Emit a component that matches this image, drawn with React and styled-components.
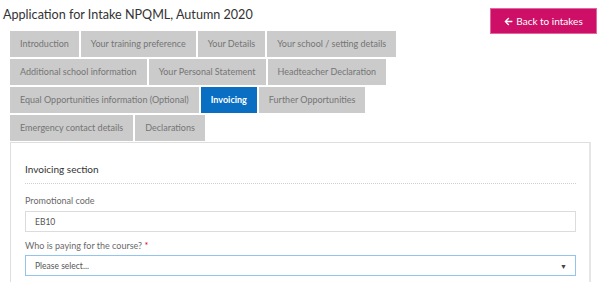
import styled, { createGlobalStyle } from 'styled-components'

const Global = createGlobalStyle`
  body{
    margin: 0;
    background: #fff;
    font-family: "Lato", "Liberation Sans", sans-serif;
  }
`

const Page = styled.div`
  padding: 0 5px 0 3px;
`

const Top = styled.div`
  display: flex;
  justify-content: space-between;
  align-items: flex-start;
`

const Heading = styled.div`
  display: flex;
  flex-direction: column;
`

const Title = styled.h1`
  margin: 5px 0 6px;
  font-family: "Lato", sans-serif;
  font-weight: 400;
  font-size: 12.6px;
  line-height: 20px;
  color: #333;
`

const Tabs = styled.div`
  display: flex;
  flex-wrap: wrap;
  gap: 2px;
  width: 430px;
  margin-left: 7px;
`

const Tab = styled.div`
  height: 26px;
  line-height: 26px;
  padding: 0 10px;
  font-size: 9px;
  background: ${p => p.$active ? '#0a6fc2' : '#cbcbcb'};
  color: ${p => p.$active ? '#fff' : '#757575'};
  font-weight: ${p => p.$active ? 700 : 400};
  white-space: nowrap;
`

const BackButton = styled.button`
  margin-top: 8px;
  width: 107px;
  height: 26px;
  display: flex;
  align-items: center;
  justify-content: center;
  gap: 3px;
  background: #cd0f67;
  border: 1px solid #e4669f;
  color: #fff;
  font-family: "Lato", sans-serif;
  font-size: 10px;
  padding: 0;
`

const Panel = styled.div`
  margin: 1px 6px 0 7px;
  border: 1px solid #dedede;
  border-right: 2px solid #e6e6e6;
  border-bottom: none;
  padding: 18px 13px 10px 14px;
  height: 140px;
  box-sizing: border-box;
`

const SectionTitle = styled.div`
  font-size: 10px;
  line-height: 16px;
  color: #333;
  padding-bottom: 6px;
  border-bottom: 1px dotted #cfcfcf;
  margin-bottom: 10px;
`

const Label = styled.div`
  font-size: 9px;
  line-height: 14px;
  color: #6a6a6a;
  margin-bottom: ${p => p.$gap}px;
`

const Star = styled.span`
  color: #d9002a;
`

const Field = styled.div`
  height: 21px;
  box-sizing: border-box;
  border: 1px solid ${p => p.$focus ? '#93c4ee' : '#dcdcdc'};
  display: flex;
  align-items: center;
  justify-content: space-between;
  padding: 0 8px 0 9px;
  font-size: 8.5px;
  color: #555;
  margin-bottom: ${p => p.$gap || 0}px;
`

const Arrow = styled.span`
  font-size: 7px;
  color: #444;
`

const Arr = () => (
  <svg width="9" height="9" viewBox="0 0 448 512" fill="#fff">
    <path d="M257.5 445.1l-22.2 22.2c-9.4 9.4-24.6 9.4-33.9 0L7 273c-9.4-9.4-9.4-24.6 0-33.9L201.4 44.7c9.4-9.4 24.6-9.4 33.9 0l22.2 22.2c9.5 9.5 9.3 25-.4 34.3L136.6 216H424c13.3 0 24 10.7 24 24v32c0 13.3-10.7 24-24 24H136.6l120.5 114.8c9.8 9.3 10 24.8.4 34.3z" />
  </svg>
)

const tabs = [
  'Introduction',
  'Your training preference',
  'Your Details',
  'Your school / setting details',
  'Additional school information',
  'Your Personal Statement',
  'Headteacher Declaration',
  'Equal Opportunities information (Optional)',
  'Invoicing',
  'Further Opportunities',
  'Emergency contact details',
  'Declarations',
]

function App(){
  return(
    <Page>
      <Global />
      <Top>
        <Heading>
          <Title>Application for Intake NPQML, Autumn 2020</Title>
          <Tabs>
            {tabs.map(t => <Tab key={t} $active={t === 'Invoicing'}>{t}</Tab>)}
          </Tabs>
        </Heading>
        <BackButton><Arr />Back to intakes</BackButton>
      </Top>
      <Panel>
        <SectionTitle>Invoicing section</SectionTitle>
        <Label $gap={3}>Promotional code</Label>
        <Field $gap={7}>EB10</Field>
        <Label $gap={2}>Who is paying for the course? <Star>*</Star></Label>
        <Field $focus>Please select...<Arrow>▼</Arrow></Field>
      </Panel>
    </Page>
  )
}

export default App;
